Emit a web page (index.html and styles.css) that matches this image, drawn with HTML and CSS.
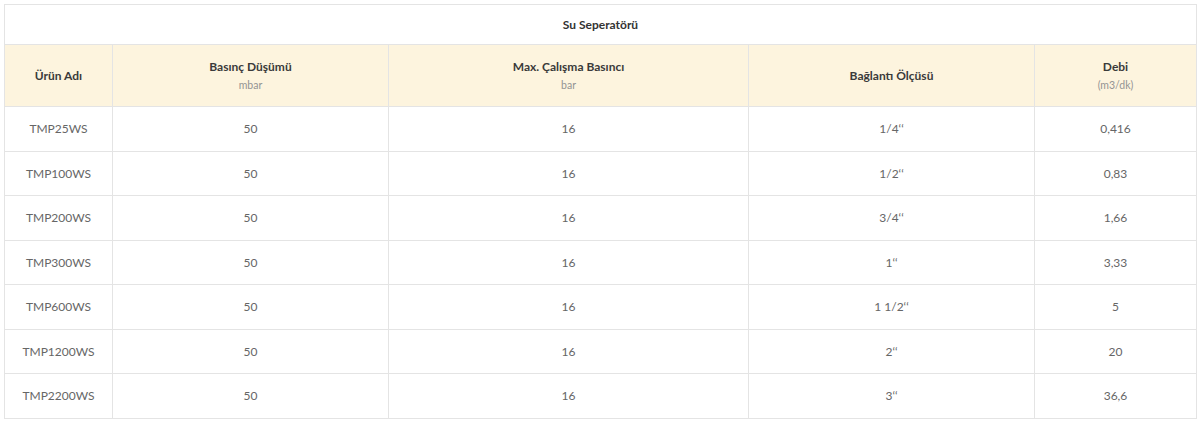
FILE: index.html
```html
<!DOCTYPE html>
<html lang="tr">
<head>
<meta charset="utf-8">
<title>Su Seperatörü</title>
<link rel="stylesheet" href="styles.css">
</head>
<body>
<div class="wrap">
<table class="spec">
  <colgroup>
    <col class="c1"><col class="c2"><col class="c3"><col class="c4"><col class="c5">
  </colgroup>
  <thead>
    <tr class="title-row"><th colspan="5">Su Seperatörü</th></tr>
    <tr class="head-row">
      <th>Ürün Adı</th>
      <th>Basınç Düşümü<span class="unit">mbar</span></th>
      <th>Max. Çalışma Basıncı<span class="unit">bar</span></th>
      <th>Bağlantı Ölçüsü</th>
      <th>Debi<span class="unit">(m3/dk)</span></th>
    </tr>
  </thead>
  <tbody>
    <tr><td>TMP25WS</td><td>50</td><td>16</td><td>1/4‘‘</td><td>0,416</td></tr>
    <tr><td>TMP100WS</td><td>50</td><td>16</td><td>1/2‘‘</td><td>0,83</td></tr>
    <tr><td>TMP200WS</td><td>50</td><td>16</td><td>3/4‘‘</td><td>1,66</td></tr>
    <tr><td>TMP300WS</td><td>50</td><td>16</td><td>1‘‘</td><td>3,33</td></tr>
    <tr><td>TMP600WS</td><td>50</td><td>16</td><td>1 1/2‘‘</td><td>5</td></tr>
    <tr><td>TMP1200WS</td><td>50</td><td>16</td><td>2‘‘</td><td>20</td></tr>
    <tr><td>TMP2200WS</td><td>50</td><td>16</td><td>3‘‘</td><td>36,6</td></tr>
  </tbody>
</table>
</div>
</body>
</html>
```
FILE: styles.css
```css
html, body {
  margin: 0;
  padding: 0;
  background: #ffffff;
}
body {
  font-family: Lato, "Noto Sans", "Liberation Sans", sans-serif;
  color: #555555;
}
.wrap {
  padding: 4px 5px 4px 4px;
}
.spec {
  width: 1192px;
  border-collapse: collapse;
  table-layout: fixed;
}
.c1 { width: 108px; }
.c2 { width: 276px; }
.c3 { width: 360px; }
.c4 { width: 286px; }
.c5 { width: 162px; }
.spec th,
.spec td {
  border: 1px solid #e4e4e4;
  text-align: center;
  vertical-align: middle;
  padding: 0;
}
.title-row th {
  height: 39px;
  font-size: 12px;
  font-weight: 700;
  color: #333333;
  background: #ffffff;
}
.head-row th {
  height: 61px;
  background: #fdf4de;
  font-size: 12px;
  font-weight: 700;
  color: #3a3a3a;
  line-height: 16px;
}
.unit {
  display: block;
  margin-top: 4px;
  font-size: 10.5px;
  font-weight: 400;
  color: #939393;
  line-height: 13px;
}
.spec td {
  height: 43.5px;
  font-size: 12px;
  color: #666666;
}
```
